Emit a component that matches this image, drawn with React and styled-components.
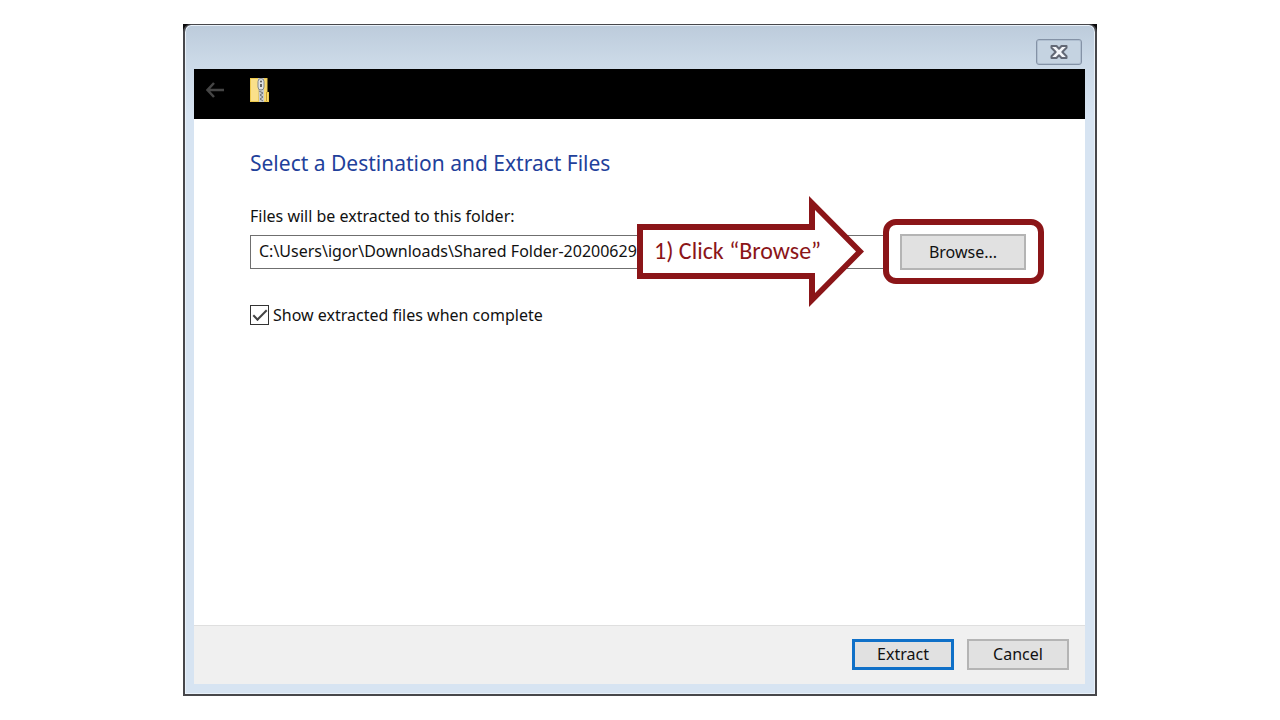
import React, { useState } from "react";
import styled, { createGlobalStyle } from "styled-components";

const GlobalStyle = createGlobalStyle`
  *, *::before, *::after { box-sizing: border-box; }
  body {
    margin: 0;
    background: #fff;
    color: #111;
    font-family: "Segoe UI", "Noto Sans", sans-serif;
    font-size: 16px;
    line-height: 20px;
  }
  button, input { font: inherit; color: inherit; }
`;

const Page = styled.div`
  display: flex;
  justify-content: center;
  min-height: 100vh;
  padding: 24px;
`;

const Backdrop = styled.div`
  display: flex;
  width: 100%;
  max-width: 914px;
  background: #0a0a0c;
`;

const Dialog = styled.section`
  flex: 1;
  min-width: 0;
  display: flex;
  flex-direction: column;
  padding: 0 10px 10px 9px;
  border: 2px solid #47474b;
  border-top-width: 1px;
  border-radius: 8px 8px 0 0;
  background: linear-gradient(#bccbdb, #cbd9e7 36px, #d7e4f2 90px);
  box-shadow: inset 0 0 0 1px #e9f1f9;
`;

const TitleBar = styled.header`
  display: flex;
  justify-content: flex-end;
  height: 44px;
  padding: 14px 3px 4px;
`;

const CloseButton = styled.button`
  display: grid;
  place-items: center;
  width: 46px;
  height: 26px;
  padding: 0;
  border: 1px solid #8492a6;
  border-radius: 3px;
  background: #c5d3e1;
  box-shadow: inset 0 0 0 1px #b0bfd0;
`;

const Content = styled.div`
  flex: 1;
  display: flex;
  flex-direction: column;
  background: #fff;
`;

const NavBar = styled.div`
  display: flex;
  align-items: flex-start;
  gap: 24px;
  height: 50px;
  padding: 8px 10px;
  background: #000;
`;

const BackButton = styled.button`
  display: grid;
  place-items: center;
  width: 22px;
  height: 26px;
  padding: 0;
  border: 0;
  background: none;
`;

const Body = styled.main`
  flex: 1;
  padding: 28px 59px 28px 56px;
`;

const Title = styled.h1`
  margin: 0 0 27px;
  color: #1f419b;
  font-size: 21px;
  font-weight: 400;
  line-height: 32px;
`;

const FieldLabel = styled.label`
  display: block;
  margin-bottom: 8px;
`;

const FieldRow = styled.div`
  display: flex;
  align-items: center;
  gap: 14px;
  margin-bottom: 35px;
`;

const PathField = styled.div`
  position: relative;
  flex: 1;
  min-width: 0;
`;

const PathInput = styled.input`
  display: block;
  width: 100%;
  height: 34px;
  padding: 0 8px 2px;
  border: 1px solid #6f6f6f;
  border-radius: 0;
  background: #fff;
  outline: none;
`;

const Highlighted = styled.div`
  position: relative;
  display: flex;

  &::before {
    content: "";
    position: absolute;
    inset: -15px -18px -14px -17px;
    border: 6px solid #8b1518;
    border-radius: 13px;
    background: #fff;
  }
`;

const Button = styled.button`
  position: relative;
  width: ${(p) => (p.$wide ? "126px" : "102px")};
  height: ${(p) => (p.$wide ? "36px" : "31px")};
  padding: 0 0 1px;
  border: ${(p) => (p.$primary ? "3px solid #0f70c8" : "2px solid #b4b4b4")};
  border-radius: 0;
  background: #e1e1e1;
`;

const Callout = styled.div`
  position: absolute;
  top: 50%;
  right: 22px;
  display: grid;
  align-items: center;
  width: 227px;
  height: 112px;
  padding: 0 0 2px 17px;
  transform: translateY(-50%);
  color: #8b1518;
  font-family: Calibri, Carlito, Lato, sans-serif;
  font-size: 24px;
  line-height: 28px;
  white-space: nowrap;
`;

const CalloutShape = styled.svg`
  position: absolute;
  inset: 0;
`;

const CalloutText = styled.span`
  position: relative;
`;

const CheckLabel = styled.label`
  display: flex;
  align-items: center;
  gap: 4px;
`;

const Checkbox = styled.input`
  appearance: none;
  width: 19px;
  height: 20px;
  margin: 0;
  border: 1px solid #333;
  background: #fff;

  &:checked::after {
    content: "";
    display: block;
    width: 14px;
    height: 7px;
    margin: 4px 2px;
    border-left: 2px solid #444;
    border-bottom: 2px solid #444;
    transform: rotate(-45deg);
  }
`;

const Footer = styled.footer`
  display: flex;
  justify-content: flex-end;
  gap: 13px;
  padding: 13px 16px 14px;
  border-top: 1px solid #dfdfdf;
  background: #f0f0f0;
`;

const CloseIcon = () => (
  <svg width="18" height="16" viewBox="0 0 18 16" aria-hidden="true">
    <path
      d="M1.5 2H6.5L9 4.7L11.5 2H16.5V3.8L12.3 8L16.5 12.2V14H11.5L9 11.3L6.5 14H1.5V12.2L5.7 8L1.5 3.8Z"
      fill="#f4f6fa"
      stroke="#626875"
      strokeWidth="2"
      strokeLinejoin="round"
    />
  </svg>
);

const BackIcon = () => (
  <svg width="18" height="16" viewBox="0 0 18 16" fill="none" stroke="#454545" strokeWidth="2.5" aria-hidden="true">
    <path d="M8 1L1.5 8L8 15M1.5 8H18" />
  </svg>
);

const ZipFolderIcon = () => (
  <svg width="20" height="26" viewBox="0 0 20 26" aria-hidden="true">
    <path d="M0 1H17.5V15H19V25H0Z" fill="#edc94e" />
    <path d="M1 2H8V24H1Z" fill="#fae08a" />
    <path d="M14 2H16.5V16H18V24H14Z" fill="#f7d971" />
    <path d="M16.5 15V24" stroke="#c99e2d" />
    <path d="M8 1H14V25H9Z" fill="#c8cac9" />
    <rect x="8" y="1.5" width="6" height="11.5" rx="3" fill="#e0e3e5" stroke="#83888b" />
    <circle cx="11" cy="4.5" r="1" fill="#555" />
    <path d="M11 7V10" stroke="#666" strokeWidth="2" />
    <path d="M9 14L13 16L10 18L13 20L10 22L13 24" fill="none" stroke="#707476" strokeWidth="1" />
  </svg>
);

export default function App() {
  const [path, setPath] = useState("C:\\Users\\igor\\Downloads\\Shared Folder-20200629");
  const [show, setShow] = useState(true);

  return (
    <>
      <GlobalStyle />
      <Page>
        <Backdrop>
          <Dialog aria-labelledby="dialog-title">
            <TitleBar>
              <CloseButton type="button" aria-label="Close"><CloseIcon /></CloseButton>
            </TitleBar>
            <Content>
              <NavBar>
                <BackButton type="button" aria-label="Back"><BackIcon /></BackButton>
                <ZipFolderIcon />
              </NavBar>
              <Body>
                <Title id="dialog-title">Select a Destination and Extract Files</Title>
                <FieldLabel htmlFor="path">Files will be extracted to this folder:</FieldLabel>
                <FieldRow>
                  <PathField>
                    <PathInput id="path" type="text" spellCheck={false} value={path} onChange={(e) => setPath(e.target.value)} />
                    <Callout>
                      <CalloutShape width="227" height="111" viewBox="0 0 227 111" aria-hidden="true">
                        <path d="M0 28H172V0L227 55.5L172 111V83H0Z" fill="#8b1518" />
                        <path d="M6 34H178V14L219 55.5L178 97V77H6Z" fill="#fff" />
                      </CalloutShape>
                      <CalloutText>1) Click “Browse”</CalloutText>
                    </Callout>
                  </PathField>
                  <Highlighted>
                    <Button type="button" $wide>Browse...</Button>
                  </Highlighted>
                </FieldRow>
                <CheckLabel>
                  <Checkbox type="checkbox" checked={show} onChange={(e) => setShow(e.target.checked)} />
                  Show extracted files when complete
                </CheckLabel>
              </Body>
              <Footer>
                <Button type="button" $primary>Extract</Button>
                <Button type="button">Cancel</Button>
              </Footer>
            </Content>
          </Dialog>
        </Backdrop>
      </Page>
    </>
  );
}
